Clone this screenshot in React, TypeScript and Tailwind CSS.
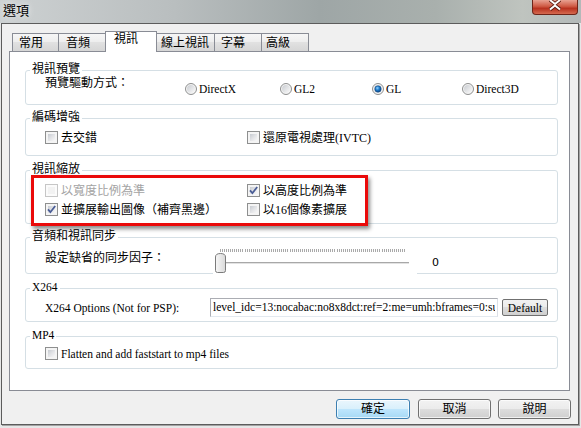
import React, { useId } from "react";

const F = "font-['Liberation_Serif','Noto_Sans_CJK_TC',serif]";

function Check({ checked = false, disabled = false }: { checked?: boolean; disabled?: boolean }) {
  return (
    <span
      className={`relative flex-none w-[13px] h-[13px] border p-[2px] ${
        disabled ? "border-[#c6c6c6] bg-[#fbfbfb]" : "border-[#8e8f8f] bg-[#f4f4f4]"
      }`}
    >
      <span
        className={`block w-full h-full ${
          disabled
            ? "bg-[#f2f2f2]"
            : "bg-gradient-to-br from-[#c7cbd1] via-[#e2e3e6] to-[#f8f8f8]"
        }`}
      />
      {checked && (
        <svg className="absolute left-0 top-0" width="11" height="11" viewBox="0 0 11 11">
          <path d="M2 5.4 L4.4 8.2 L9.2 2" fill="none" stroke="#4a5d96" strokeWidth="1.8" />
        </svg>
      )}
    </span>
  );
}

function CheckItem({
  label,
  checked,
  disabled,
  latin,
}: {
  label: string;
  checked?: boolean;
  disabled?: boolean;
  latin?: boolean;
}) {
  return (
    <div className="flex items-center gap-[3px] h-[13px]">
      <Check checked={checked} disabled={disabled} />
      <span
        className={`leading-[12px] whitespace-nowrap ${latin ? "text-[11.5px]" : ""} ${
          disabled ? "text-[#a3a3a3]" : "text-black"
        }`}
      >
        {label}
      </span>
    </div>
  );
}

function Radio({ checked = false }: { checked?: boolean }) {
  const id = useId().replace(/:/g, "");
  return (
    <svg width="12" height="12" viewBox="0 0 12 12" className="flex-none">
      <defs>
        <linearGradient id={`g${id}`} x1="0" y1="0" x2="1" y2="1">
          <stop offset="0" stopColor="#c9ccd1" />
          <stop offset="1" stopColor="#fafafa" />
        </linearGradient>
        <radialGradient id={`b${id}`} cx="0.4" cy="0.35" r="0.7">
          <stop offset="0" stopColor="#8fd0ff" />
          <stop offset="0.5" stopColor="#1b78c8" />
          <stop offset="1" stopColor="#0d3f7a" />
        </radialGradient>
      </defs>
      <circle cx="6" cy="6" r="5.5" fill="#f4f4f4" stroke="#8e8f8f" />
      <circle cx="6" cy="6" r="4" fill={`url(#g${id})`} />
      {checked && <circle cx="6" cy="6" r="3.2" fill={`url(#b${id})`} stroke="#164c86" strokeWidth="0.6" />}
    </svg>
  );
}

function RadioItem({ label, checked, w }: { label: string; checked?: boolean; w?: string }) {
  return (
    <div className={`flex items-center gap-[2px] h-[12px] ${w ?? ""}`}>
      <Radio checked={checked} />
      <span className="leading-[12px] text-[11.5px]">{label}</span>
    </div>
  );
}

function Group({
  title,
  className,
  latin,
  children,
}: {
  title: string;
  className: string;
  latin?: boolean;
  children?: React.ReactNode;
}) {
  return (
    <div className={`ml-[15px] w-[533px] flex-none border border-[#d5dfe5] rounded-[3px] flex flex-col ${className}`}>
      <div
        className={`-mt-[8px] ml-[4px] px-[2px] w-fit h-[12px] bg-white leading-[12px] whitespace-nowrap ${
          latin ? "text-[11.5px]" : ""
        }`}
      >
        {title}
      </div>
      {children}
    </div>
  );
}

function Slider() {
  const ticks: number[] = [];
  const n = 90;
  for (let i = 0; i <= n; i++) ticks.push(7 + Math.round((i * 184) / n));
  return (
    <svg width="204" height="31" viewBox="0 0 204 31" className="flex-none">
      <defs>
        <linearGradient id="thumbg" x1="0" y1="0" x2="1" y2="0">
          <stop offset="0" stopColor="#f7f7f7" />
          <stop offset="1" stopColor="#d9d9d9" />
        </linearGradient>
      </defs>
      <rect x="0" y="0" width="204" height="31" fill="#ffffff" />
      {ticks.map((x, i) => (
        <rect key={i} x={x} y="5" width="1" height="3" fill="#a9a9a9" />
      ))}
      <rect x="7" y="18" width="189" height="1" fill="#a8a8a8" />
      <rect x="7" y="19" width="189" height="1" fill="#e2e2e2" />
      <path
        d="M2.5 13 Q2.5 9.5 7.5 9.5 Q12.5 9.5 12.5 13 V26.5 Q12.5 28.5 10.5 28.5 H4.5 Q2.5 28.5 2.5 26.5 Z"
        fill="url(#thumbg)"
        stroke="#7b7b7b"
      />
    </svg>
  );
}

function Btn({ label, def, w }: { label: string; def?: boolean; w: string }) {
  return (
    <div
      className={`${w} h-[20px] rounded-[3px] border flex items-center justify-center leading-[12px] shadow-[inset_0_0_0_1px_rgba(255,255,255,0.7)] ${
        def
          ? "border-[#3c7fb1] bg-[linear-gradient(to_bottom,#eaf6fd_0%,#d9f0fc_50%,#bee6fd_50%,#a7d9f5_100%)]"
          : "border-[#707070] bg-[linear-gradient(to_bottom,#f2f2f2_0%,#ebebeb_50%,#dddddd_50%,#cfcfcf_100%)]"
      }`}
    >
      {label}
    </div>
  );
}

export default function App() {
  const tabs = [
    { t: "常用", w: "w-[47px]", pl: "pl-[6px]" },
    { t: "音頻", w: "w-[48px]", pl: "pl-[7px]" },
    { t: "視訊", w: "w-[52px]", pl: "pl-[8px]", sel: true },
    { t: "線上視訊", w: "w-[59px]", pl: "pl-[4px]" },
    { t: "字幕", w: "w-[48px]", pl: "pl-[6px]" },
    { t: "高級", w: "w-[48px]", pl: "pl-[4px]" },
  ];
  return (
    <div className={`relative w-[581px] h-[428px] overflow-hidden bg-[#e6e7e7] ${F} text-[12px] text-black`}>
      {/* title bar */}
      <div className="h-[23px] flex items-start justify-between bg-[linear-gradient(to_right,#cdd1d2_0%,#b9bebf_30%,#9ea6a6_55%,#a9b0ad_75%,#bfc4bf_90%,#b3b9b9_100%)]">
        <div className="pl-[3px] pt-[3px] text-[13px] leading-[14px] font-['Noto_Sans_CJK_TC',sans-serif] [text-shadow:0_0_6px_rgba(255,255,255,0.9)]">
          選項
        </div>
        <div className="mr-[3px] w-[46px] h-[15px] rounded-b-[4px] border border-t-0 border-[#6e2519] bg-[linear-gradient(to_bottom,#e8a191_0%,#cf5a44_45%,#b8321f_60%,#d56a50_100%)] flex items-start justify-center">
          <svg width="16" height="11" viewBox="0 0 16 11">
            <path d="M3 0 L8 4 L13 0 M3 9.5 L8 5.5 L13 9.5" stroke="#5a1a10" strokeWidth="3.6" fill="none" />
            <path d="M3 0 L8 4 L13 0 M3 9.5 L8 5.5 L13 9.5" stroke="#ffffff" strokeWidth="2" fill="none" />
          </svg>
        </div>
      </div>

      {/* client */}
      <div className="ml-[1px] w-[578px] h-[402px] border border-[#5c5c5c] bg-[#f0f0f0] shadow-[1px_1px_0_#a3a3a3] flex flex-col">
        {/* tabs */}
        <div className="mt-[7px] ml-[10px] h-[20px] flex items-end">
          {tabs.map((t, i) =>
            t.sel ? (
              <div
                key={t.t}
                className={`${t.w} ${t.pl} ${i ? "-ml-px" : ""} relative z-10 -mb-px h-[21px] pt-[1px] border border-b-0 border-[#898c95] bg-white leading-[12px] whitespace-nowrap`}
              >
                {t.t}
              </div>
            ) : (
              <div
                key={t.t}
                className={`${t.w} ${t.pl} ${i ? "-ml-px" : ""} h-[18px] pt-[3px] border border-b-0 border-[#898c95] bg-[linear-gradient(to_bottom,#f6f6f6_0%,#ededed_50%,#e1e1e1_50%,#d6d6d6_100%)] leading-[12px] whitespace-nowrap`}
              >
                {t.t}
              </div>
            )
          )}
        </div>

        {/* panel */}
        <div className="ml-[7px] w-[561px] h-[340px] flex-none border border-[#898c95] bg-white flex flex-col">
          <Group title="視訊預覽" className="mt-[18px] h-[35px]">
            <div className="mt-[2px] pl-[19px] flex items-start">
              <div className="w-[140px] leading-[12px] whitespace-nowrap">預覽驅動方式：</div>
              <div className="mt-[6px] flex">
                <RadioItem label="DirectX" w="w-[95px]" />
                <RadioItem label="GL2" w="w-[92px]" />
                <RadioItem label="GL" checked w="w-[90px]" />
                <RadioItem label="Direct3D" />
              </div>
            </div>
          </Group>

          <Group title="編碼增強" className="mt-[13px] h-[38px]">
            <div className="mt-[8px] pl-[19px] flex">
              <div className="w-[202px]">
                <CheckItem label="去交錯" />
              </div>
              <CheckItem label="還原電視處理(IVTC)" />
            </div>
          </Group>

          <Group title="視訊縮放" className="mt-[14px] h-[54px]">
            <div className="mt-[9px] pl-[19px] flex">
              <div className="w-[202px]">
                <CheckItem label="以寬度比例為準" disabled />
              </div>
              <CheckItem label="以高度比例為準" checked />
            </div>
            <div className="mt-[6px] pl-[19px] flex">
              <div className="w-[202px]">
                <CheckItem label="並擴展輸出圖像（補齊黑邊）" checked />
              </div>
              <CheckItem label="以16個像素擴展" />
            </div>
          </Group>

          <Group title="音頻和視訊同步" className="mt-[13px] h-[37px]">
            <div className="mt-[2px] pl-[19px] flex items-start">
              <div className="mt-[8px] w-[168px] leading-[12px] whitespace-nowrap">設定缺省的同步因子：</div>
              <Slider />
              <div className="mt-[13px] ml-[15px] leading-[12px] font-['DejaVu_Sans',sans-serif] text-[11px]">0</div>
            </div>
          </Group>

          <Group title="X264" latin className="mt-[14px] h-[34px]">
            <div className="mt-[5px] pl-[19px] flex items-center">
              <div className="w-[165px] leading-[12px] whitespace-nowrap text-[11.5px]">X264 Options (Not for PSP):</div>
              <div className="w-[288px] h-[19px] flex-none border border-[#abadb3] border-r-[#dbdfe6] border-b-[#e3e9ef] bg-white overflow-hidden pl-[2px] leading-[17px] text-[11.5px]">
                <div className="w-[282px] overflow-hidden whitespace-nowrap">
                  level_idc=13:nocabac:no8x8dct:ref=2:me=umh:bframes=0:su
                </div>
              </div>
              <div className="ml-[4px] w-[46px] h-[17px] flex-none rounded-[2px] border border-[#707070] bg-[linear-gradient(to_bottom,#f2f2f2_0%,#ebebeb_50%,#dddddd_50%,#cfcfcf_100%)] flex items-center justify-center leading-[12px] text-[11.5px]">
                Default
              </div>
            </div>
          </Group>

          <Group title="MP4" latin className="mt-[14px] h-[33px]">
            <div className="mt-[6px] pl-[19px] flex">
              <CheckItem label="Flatten and add faststart to mp4 files" latin />
            </div>
          </Group>
        </div>

        {/* buttons */}
        <div className="mt-[8px] pr-[7px] flex justify-end">
          <Btn label="確定" def w="w-[74px]" />
          <div className="w-[8px]" />
          <Btn label="取消" w="w-[73px]" />
          <div className="w-[7px]" />
          <Btn label="說明" w="w-[73px]" />
        </div>
      </div>

      {/* red annotation box */}
      <div className="absolute left-[31px] top-[175px] w-[337px] h-[51px] border-[3px] border-[#ea0a0a] shadow-[2px_3px_4px_rgba(0,0,0,0.45)]" />
    </div>
  );
}
